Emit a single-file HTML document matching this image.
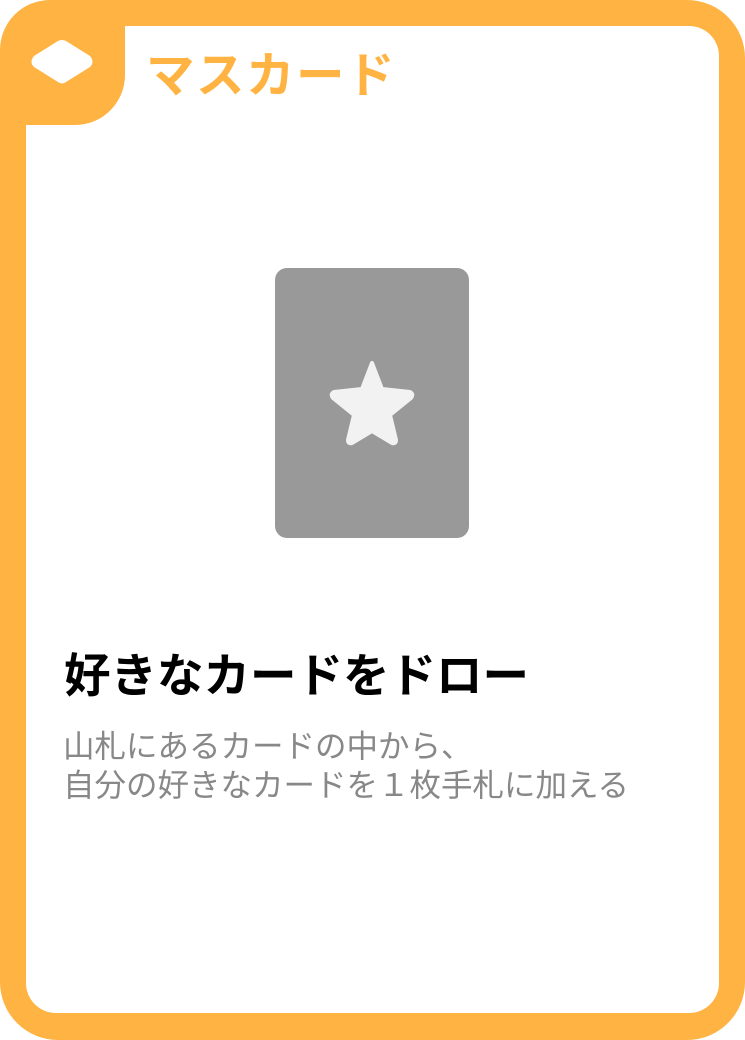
<!DOCTYPE html>
<html><head><meta charset="utf-8"><style>
html,body{margin:0;padding:0;background:#fff;}
body{width:745px;height:1040px;position:relative;overflow:hidden;font-family:"Liberation Sans","Noto Sans CJK JP",sans-serif;}
.outer{position:absolute;left:0;top:0;width:745px;height:1040px;background:#FFB343;border-radius:58px;}
.inner{position:absolute;left:26px;top:26px;width:693px;height:987px;background:#fff;border-radius:30px;}
.tab{position:absolute;left:0;top:0;width:125px;height:125px;background:#FFB343;border-radius:50px 0 50px 0;}
.title{position:absolute;left:146px;top:41px;font-size:48.5px;font-weight:bold;color:#FFB343;letter-spacing:1.5px;line-height:70px;}
.card{position:absolute;left:275px;top:268px;width:194px;height:270px;background:#999;border-radius:12px;}
h1{position:absolute;left:64px;top:645px;margin:0;font-size:46.5px;font-weight:bold;color:#000;line-height:62px;white-space:nowrap;}
.desc{position:absolute;left:63px;top:727px;font-size:31.5px;color:#888;line-height:39px;white-space:nowrap;}
</style></head><body>
<div class="outer"></div>
<div class="inner"></div>
<div class="tab"></div>
<svg style="position:absolute;left:0;top:0" width="125" height="125"><path d="M58 41 Q62 39 66 41 L90 56 Q95 62 90 67 L66 82 Q62 85 58 82 L34 67 Q29 62 34 56 Z" fill="#fff"/></svg>
<div class="title">マスカード</div>
<div class="card"></div>
<svg style="position:absolute;left:275px;top:268px" width="194" height="270"><path d="M97 95 L107 121 L135 124 Q139 126 136 130 L115 147 L121 172 Q121 176 117 175 L97 163 L77 175 Q73 176 73 172 L79 147 L58 130 Q55 126 59 124 L87 121 Z" fill="#f2f2f2" stroke="#f2f2f2" stroke-width="4" stroke-linejoin="round"/></svg>
<h1>好きなカードをドロー</h1>
<div class="desc">山札にあるカードの中から、<br>自分の好きなカードを１枚手札に加える</div>
</body></html>
